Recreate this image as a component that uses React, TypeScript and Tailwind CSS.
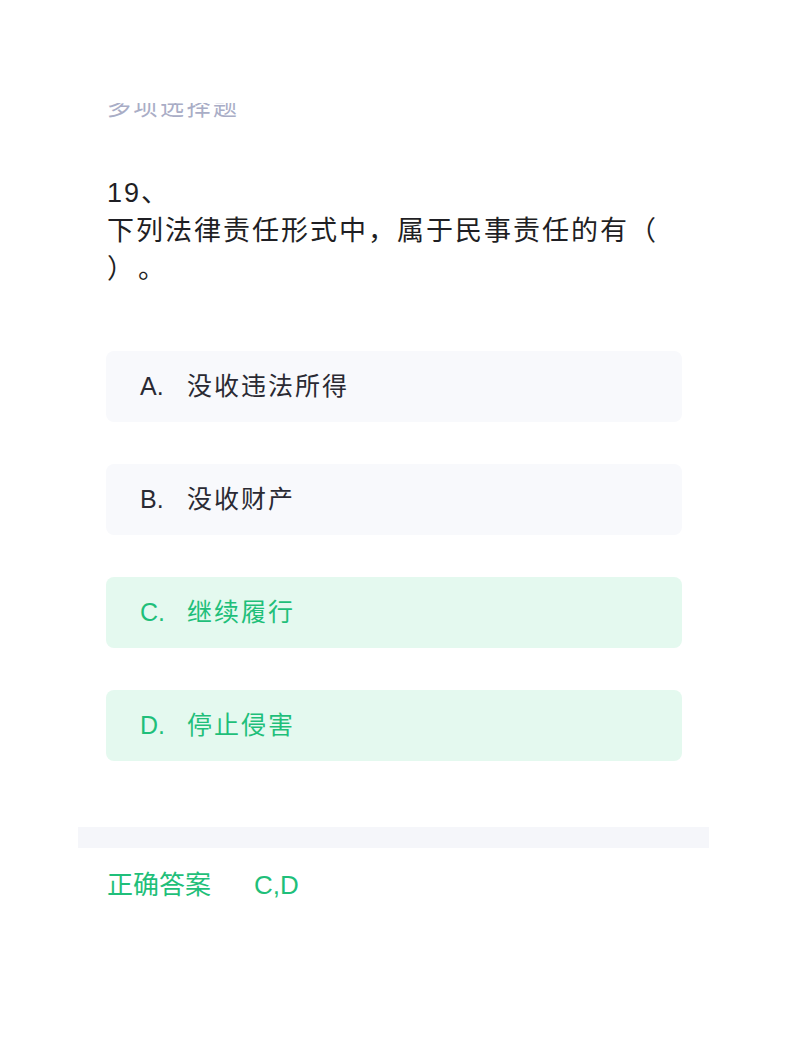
import React from "react";

const font = { fontFamily: '"Liberation Sans", "Noto Sans CJK SC", sans-serif' };

type Opt = { label: string; text: string; correct: boolean };

const options: Opt[] = [
  { label: "A.", text: "没收违法所得", correct: false },
  { label: "B.", text: "没收财产", correct: false },
  { label: "C.", text: "继续履行", correct: true },
  { label: "D.", text: "停止侵害", correct: true },
];

export default function App() {
  return (
    <div
      className="w-[788px] h-[1051px] bg-white overflow-hidden flex flex-col"
      style={font}
    >
      <div className="mt-[103px] h-[15px] overflow-hidden pl-[107px]">
        <div className="-mt-[8px] text-[24px] leading-[24px] tracking-[2.5px] text-[#a9adc6] whitespace-nowrap">
          多项选择题
        </div>
      </div>

      <div className="mt-[56px] pl-[107px] pr-[100px] text-[27px] leading-[38px] tracking-[2px] text-[#1f1f24]">
        <div>19、</div>
        <div>下列法律责任形式中，属于民事责任的有（</div>
        <div>
          <span className="inline-block w-[31px]">）</span>
          <span>。</span>
        </div>
      </div>

      <div className="mt-[63px] ml-[106px] w-[576px] flex flex-col gap-[42px]">
        {options.map((o) => (
          <div
            key={o.label}
            className={`h-[71px] rounded-[8px] flex items-center pl-[34px] text-[25px] tracking-[2px] ${
              o.correct ? "bg-[#e4f9ef] text-[#1fbf7a]" : "bg-[#f8f9fc] text-[#2a2a33]"
            }`}
          >
            <span className="w-[47px] tracking-normal">{o.label}</span>
            <span>{o.text}</span>
          </div>
        ))}
      </div>

      <div className="mt-[66px] ml-[78px] w-[631px] h-[21px] bg-[#f5f6fa]" />

      <div className="mt-[19px] pl-[107px] flex items-center h-[36px] text-[26px] text-[#1fbf7a]">
        <span className="w-[147px]">正确答案</span>
        <span>C,D</span>
      </div>
    </div>
  );
}
